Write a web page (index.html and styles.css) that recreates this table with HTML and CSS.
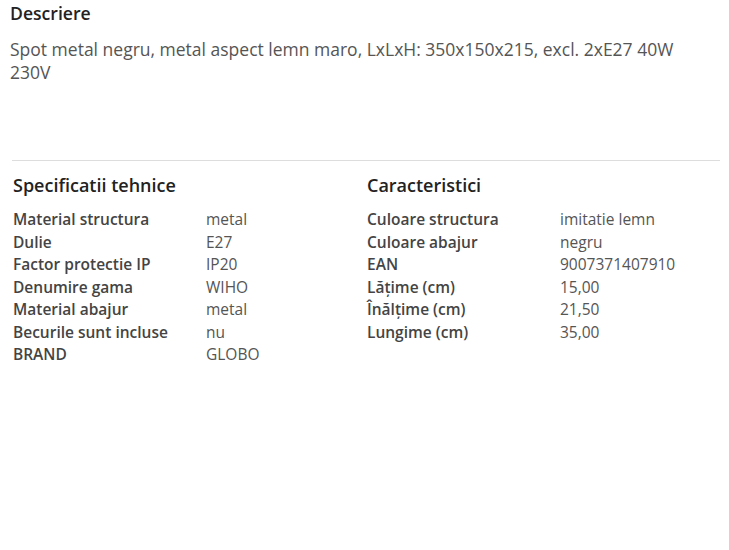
FILE: index.html
```html
<!DOCTYPE html>
<html lang="ro">
<head>
<meta charset="utf-8">
<link rel="stylesheet" href="styles.css">
</head>
<body>
<div class="page">
  <section class="desc">
    <h2 class="desc-title">Descriere</h2>
    <p class="desc-text">Spot metal negru, metal aspect lemn maro, LxLxH: 350x150x215, excl. 2xE27 40W 230V</p>
  </section>
  <hr class="sep">
  <div class="specs">
    <div class="col">
      <h3 class="col-title">Specificatii tehnice</h3>
      <dl class="rows">
        <dt>Material structura</dt><dd>metal</dd>
        <dt>Dulie</dt><dd>E27</dd>
        <dt>Factor protectie IP</dt><dd>IP20</dd>
        <dt>Denumire gama</dt><dd>WIHO</dd>
        <dt>Material abajur</dt><dd>metal</dd>
        <dt>Becurile sunt incluse</dt><dd>nu</dd>
        <dt>BRAND</dt><dd>GLOBO</dd>
      </dl>
    </div>
    <div class="col">
      <h3 class="col-title">Caracteristici</h3>
      <dl class="rows">
        <dt>Culoare structura</dt><dd>imitatie lemn</dd>
        <dt>Culoare abajur</dt><dd>negru</dd>
        <dt>EAN</dt><dd>9007371407910</dd>
        <dt>Lăţime (cm)</dt><dd>15,00</dd>
        <dt>Înălţime (cm)</dt><dd>21,50</dd>
        <dt>Lungime (cm)</dt><dd>35,00</dd>
      </dl>
    </div>
  </div>
</div>
</body>
</html>
```

FILE: styles.css
```css
html, body {
  margin: 0;
  padding: 0;
  background: #fff;
}
body {
  font-family: "Open Sans", "DejaVu Sans", sans-serif;
  color: #555;
}
.page {
  width: 729px;
  padding: 0 9px 0 10px;
  box-sizing: border-box;
}
.desc-title {
  margin: 0;
  padding-top: 2px;
  font-size: 17.6px;
  line-height: 22px;
  font-weight: 600;
  color: #222;
}
.desc-text {
  margin: 14px 0 0;
  padding-right: 20px;
  font-size: 17.5px;
  line-height: 23px;
  color: #555;
}
.sep {
  margin: 76px 0 0 2px;
  border: 0;
  border-top: 1px solid #ddd;
  height: 0;
}
.specs {
  display: grid;
  grid-template-columns: 354px 1fr;
  padding: 12px 0 0 3px;
}
.col-title {
  margin: 0 0 11px;
  font-size: 18px;
  line-height: 24px;
  font-weight: 600;
  color: #222;
}
.rows {
  display: grid;
  grid-template-columns: 193px 1fr;
  margin: 0;
  font-size: 15.5px;
  line-height: 22.5px;
}
.rows dt {
  font-weight: 600;
  color: #444;
}
.rows dd {
  margin: 0;
  color: #555;
}
```
